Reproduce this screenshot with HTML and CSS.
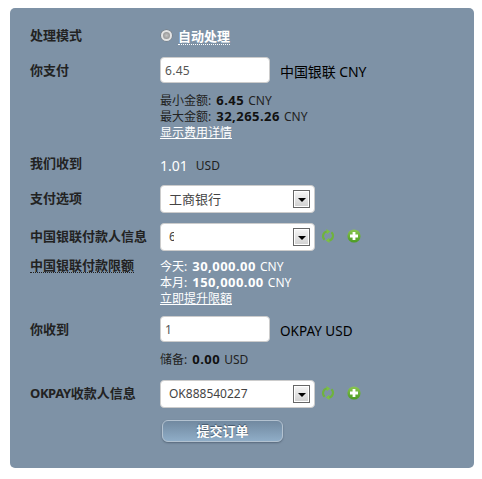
FILE: index.html
```html
<!DOCTYPE html>
<html lang="zh-CN">
<head>
<meta charset="utf-8">
<title>提交订单</title>
<link rel="stylesheet" href="styles.css">
</head>
<body>
<svg class="defs" width="0" height="0">
  <defs>
    <linearGradient id="g" x1="0" y1="0" x2="0" y2="1"><stop offset="0" stop-color="#8cc751"/><stop offset="1" stop-color="#4a9a22"/></linearGradient>
    <symbol id="refresh" viewBox="0 0 14 14">
      <g fill="none" stroke="#6fb33c" stroke-width="2.1">
        <path d="M3.6 10.8A4.8 4.8 0 0 1 6 2.5"/>
        <path d="M10.4 3.2A4.8 4.8 0 0 1 8 11.5"/>
      </g>
      <path fill="#7cc044" d="M5.4 0L9.2 2.4 5.8 5.2zM8.6 14L4.8 11.6 8.2 8.8z"/>
    </symbol>
    <symbol id="plus" viewBox="0 0 14 14">
      <circle cx="7" cy="7" r="6.6" fill="url(#g)"/>
      <path fill="#fff" d="M5.6 3h2.8v2.6H11v2.8H8.4V11H5.6V8.4H3V5.6h2.6z"/>
    </symbol>
  </defs>
</svg>
<form class="panel">
  <div class="row mode">
    <label class="label">处理模式</label>
    <span class="radio"></span><a class="auto">自动处理</a>
  </div>
  <div class="row pay">
    <label class="label">你支付</label>
    <div class="input">6.45</div><span class="unit">中国银联 CNY</span>
  </div>
  <div class="row info">
    <span class="label"></span>
    <div class="lines">
      <p>最小金额: <b>6.45</b> CNY</p>
      <p>最大金额: <b>32,265.26</b> CNY</p>
      <p><a class="link">显示费用详情</a></p>
    </div>
  </div>
  <div class="row receive">
    <label class="label">我们收到</label>
    <span class="amount">1.01</span><span class="currency">USD</span>
  </div>
  <div class="row option">
    <label class="label">支付选项</label>
    <div class="select"><span class="bank">工商银行</span><i class="arrow"></i></div>
  </div>
  <div class="row payer">
    <label class="label">中国银联付款人信息</label>
    <div class="select"><span class="cut">6</span><i class="arrow"></i></div>
    <svg class="icon"><use href="#refresh"/></svg><svg class="icon add"><use href="#plus"/></svg>
  </div>
  <div class="row limits">
    <div class="label"><span class="dotted">中国银联付款限额</span></div>
    <div class="lines white">
      <p>今天: <b>30,000.00</b> CNY</p>
      <p>本月: <b>150,000.00</b> CNY</p>
      <p><a class="link">立即提升限額</a></p>
    </div>
  </div>
  <div class="row get">
    <label class="label">你收到</label>
    <div class="input">1</div><span class="unit okpay">OKPAY USD</span>
  </div>
  <div class="row reserve">
    <span class="label"></span>
    <div class="lines"><p>储备: <b>0.00</b> USD</p></div>
  </div>
  <div class="row payee">
    <label class="label"><span class="latin">OKPAY</span>收款人信息</label>
    <div class="select"><span>OK888540227</span><i class="arrow"></i></div>
    <svg class="icon"><use href="#refresh"/></svg><svg class="icon add"><use href="#plus"/></svg>
  </div>
  <div class="row submit">
    <span class="label"></span>
    <button class="button" type="button">提交订单</button>
  </div>
</form>
</body>
</html>
```
FILE: styles.css
```css
* { box-sizing: border-box; }
body {
  margin: 0;
  padding: 8px 0 0 10px;
  background: #fff;
  font: 12px/16px "Noto Sans", "Noto Sans CJK SC", sans-serif;
  color: #222;
}
.defs { position: absolute; }
.panel {
  width: 464px;
  height: 460px;
  padding: 16px 20px 0;
  border-radius: 5px;
  background: #7e92a6;
}
.row { display: flex; align-items: center; white-space: nowrap; }
.label { width: 130px; flex: none; font-size: 13px; font-weight: bold; color: #222; }
.mode { height: 24px; }
.mode .label { margin-top: -2px; }
.radio {
  width: 11px;
  height: 11px;
  margin: -2px 6px 0 1px;
  border: 2px solid #e4e4e4;
  border-radius: 50%;
  background: radial-gradient(#c4c4c4, #858585);
  box-shadow: 0 0 0 .5px #777;
}
.auto { margin-top: 1px; font-size: 13px; font-weight: bold; line-height: 15px; color: #fff; border-bottom: 1px dotted #fff; }
.pay { height: 26px; margin-top: 9px; }
.input {
  width: 110px;
  height: 26px;
  padding-left: 4px;
  border: 1px solid #ccc;
  border-radius: 4px;
  background: #fff;
  line-height: 25px;
  letter-spacing: .3px;
  color: #555;
}
.unit { margin: 3px 0 0 10px; font-size: 14px; letter-spacing: -.1px; color: #000; }
.okpay { font-size: 13.5px; letter-spacing: 0; }
.info { margin-top: 10px; }
.lines p { margin: 0; height: 16px; }
.lines b { margin: 0 1px 0 2px; font-size: 13px; letter-spacing: .45px; line-height: 1; color: #111; }
.white, .white .link, .white b { color: #fff; }
.link { color: #fff; text-decoration: underline; text-underline-offset: 1px; }
.receive { height: 24px; margin-top: 11px; }
.receive .label { margin-top: -3px; }
.amount { margin-top: 3px; font-size: 14px; letter-spacing: 0; color: #fff; }
.currency { margin: 4px 0 0 8px; font-size: 12px; }
.option { margin-top: 9px; }
.option .label { margin-top: -2px; }
.select {
  display: flex;
  align-items: center;
  justify-content: space-between;
  width: 155px;
  height: 28px;
  padding: 0 4px 0 8px;
  border: 1px solid #ccc;
  border-radius: 4px;
  background: #fff;
  color: #444;
}
.bank { font-size: 13px; }
.cut { width: 5px; overflow: hidden; }
.arrow {
  width: 17px;
  height: 18px;
  border: 1px solid #666;
  background: linear-gradient(#f6f6f6, #d0d0d0);
  box-shadow: inset 0 0 0 1px #fff;
}
.arrow::before {
  content: "";
  display: block;
  width: 0;
  margin: 7px auto 0;
  border: 4px solid transparent;
  border-top-color: #000;
  border-bottom: 0;
}
.payer { margin-top: 10px; }
.payer .label { margin-top: -2px; }
.icon { width: 14px; height: 14px; margin: -2px 0 0 6px; }
.add { margin-left: 12px; }
.limits { margin-top: 8px; align-items: flex-start; }
.limits .label { margin-top: -2px; }
.dotted { display: inline-block; line-height: 14px; border-bottom: 1px dotted #222; }
.get { margin-top: 9px; }
.reserve { margin-top: 10px; }
.payee { margin-top: 12px; }
.payee .label { margin-top: -2px; }
.latin { letter-spacing: -.4px; }
.submit { margin-top: 12px; }
.button {
  width: 121px;
  height: 22px;
  margin-left: 2px;
  padding: 0;
  border: 1px solid #b3c2d0;
  border-radius: 6px;
  background: linear-gradient(#7189a0, #8fadc7);
  box-shadow: 0 1px 2px #56687a;
  font: bold 13px/20px "Noto Sans", "Noto Sans CJK SC", sans-serif;
  color: #fff;
  text-shadow: 0 -1px 1px #435568;
}
```
